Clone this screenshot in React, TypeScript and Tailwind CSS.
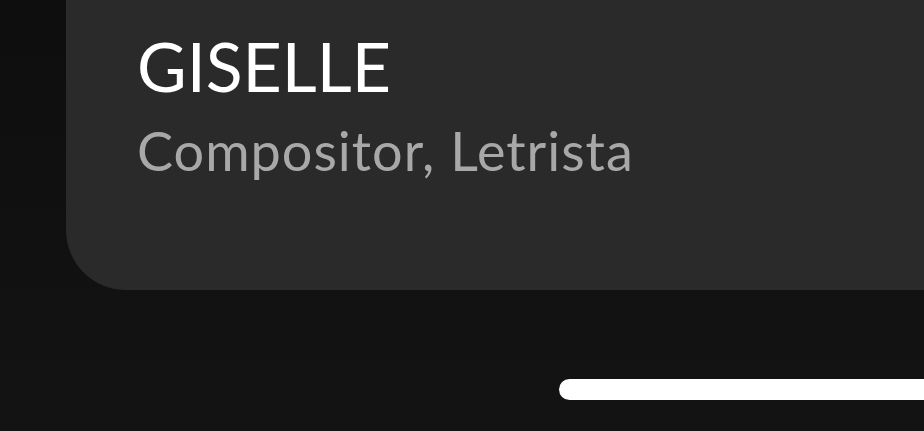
import React from "react";

export default function App() {
  return (
    <div
      className="relative flex h-[431px] w-full flex-col overflow-hidden bg-[linear-gradient(to_bottom,#0e0e0e,#131313)]"
      style={{ fontFamily: "Lato, 'Noto Sans', sans-serif" }}
    >
      <div className="ml-[66px] h-[290px] shrink-0 rounded-bl-[60px] bg-[#2a2a2a] pl-[71px] pt-[32px]">
        <div className="text-[68px] leading-none tracking-[0px] text-white">GISELLE</div>
        <div className="mt-[24px] text-[54px] leading-none tracking-[1px] text-[#a8a8a8]">
          Compositor, Letrista
        </div>
      </div>
      <div className="ml-[559px] mt-[89px] h-[21px] w-[420px] shrink-0 rounded-full bg-white" />
    </div>
  );
}
